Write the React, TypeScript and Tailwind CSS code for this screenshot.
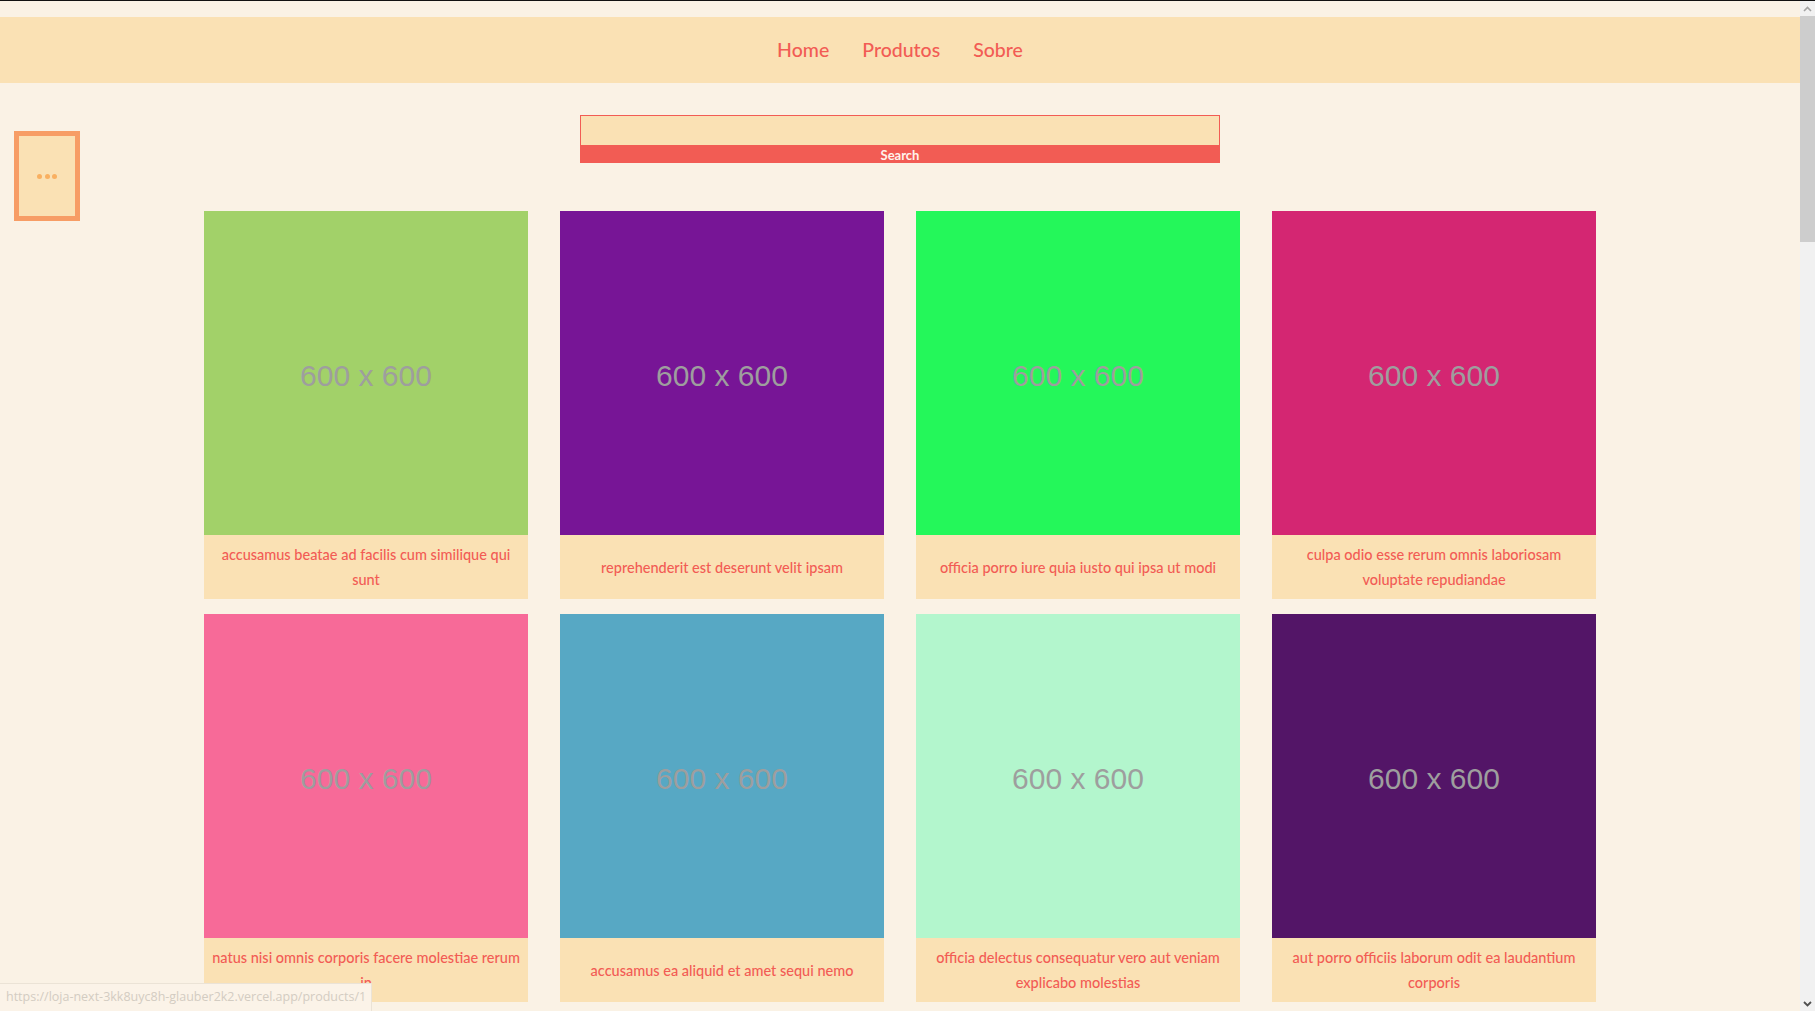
const products = [
  { title: "accusamus beatae ad facilis cum similique qui sunt", color: "bg-[#a2d169]" },
  { title: "reprehenderit est deserunt velit ipsam", color: "bg-[#771596]" },
  { title: "officia porro iure quia iusto qui ipsa ut modi", color: "bg-[#24f75a]" },
  { title: "culpa odio esse rerum omnis laboriosam voluptate repudiandae", color: "bg-[#d42672]" },
  { title: "natus nisi omnis corporis facere molestiae rerum in", color: "bg-[#f76a98]" },
  { title: "accusamus ea aliquid et amet sequi nemo", color: "bg-[#57a8c4]" },
  { title: "officia delectus consequatur vero aut veniam explicabo molestias", color: "bg-[#b3f6cd]" },
  { title: "aut porro officiis laborum odit ea laudantium corporis", color: "bg-[#531567]" },
]

function ProductCard({ title, color }: { title: string; color: string }) {
  return (
    <div className="flex flex-col">
      <div className={`${color} h-[324px] flex items-center justify-center pt-[5px]`}>
        <span className="text-[30px] text-[#9e9e9e] font-['Liberation_Sans',Arial,sans-serif]">600 x 600</span>
      </div>
      <div className="h-[64px] bg-[#fae1b4] flex items-center justify-center px-[4px] text-center text-[14.5px] leading-[25px] text-[#f25c54] font-['Lato',sans-serif] font-medium">
        {title}
      </div>
    </div>
  )
}

function Scrollbar() {
  return (
    <div className="w-[15px] bg-[#f1f1f1] flex flex-col">
      <div className="h-[15px] flex items-center justify-center">
        <svg width="9" height="6" viewBox="0 0 9 6"><path d="M1 5 L4.5 1.5 L8 5" stroke="#a3a3a3" strokeWidth="1.6" fill="none" /></svg>
      </div>
      <div className="h-[226px] bg-[#cdcdcd]" />
      <div className="flex-1" />
      <div className="h-[15px] flex items-center justify-center">
        <svg width="9" height="6" viewBox="0 0 9 6"><path d="M1 1 L4.5 4.5 L8 1" stroke="#505050" strokeWidth="1.8" fill="none" /></svg>
      </div>
    </div>
  )
}

export default function App() {
  return (
    <div className="h-[1011px] w-[1815px] overflow-hidden flex flex-col bg-[#faf2e5]">
      <div className="h-px bg-[#111]" />
      <div className="flex-1 flex min-h-0">
        <main className="relative flex-1 overflow-hidden pt-[16px]">
          {/* Header */}
          <header className="h-[66px] bg-[#fae1b4] flex items-center justify-center gap-[33px] text-[19.5px] text-[#f25c54] font-['Lato',sans-serif] font-medium">
            <a>Home</a>
            <a>Produtos</a>
            <a>Sobre</a>
          </header>

          {/* Menu toggle */}
          <button className="absolute left-[14px] top-[130px] w-[66px] h-[90px] border-[5px] border-[#f79d65] bg-[#fae1b4] flex items-center justify-center gap-[2.5px]">
            <span className="w-[5px] h-[5px] rounded-full bg-[#f9b061]" />
            <span className="w-[5px] h-[5px] rounded-full bg-[#f9b061]" />
            <span className="w-[5px] h-[5px] rounded-full bg-[#f9b061]" />
          </button>

          {/* Search */}
          <div className="mt-[32px] mx-auto w-[640px] flex flex-col">
            <input className="h-[31px] bg-[#fae1b4] border border-[#f25c54] outline-none" />
            <button className="h-[17px] bg-[#f25c54] text-[#fff3ec] text-[13px] font-bold leading-[15px] pt-[2px] font-['Lato',sans-serif]">
              Search
            </button>
          </div>

          {/* Products */}
          <div className="mt-[48px] mx-auto w-[1392px] grid grid-cols-4 gap-x-[32px] gap-y-[15px]">
            {products.map((p) => (
              <ProductCard key={p.title} title={p.title} color={p.color} />
            ))}
          </div>

          {/* Link status */}
          <div className="absolute left-0 bottom-0 w-[372px] h-[28px] bg-[#fbf3e8] border-t border-r border-[#ebe3d6] flex items-center pl-[6px] text-[12.5px] text-[#d3ccc2] font-['Open_Sans',sans-serif] whitespace-nowrap overflow-hidden">
            https://loja-next-3kk8uyc8h-glauber2k2.vercel.app/products/1
          </div>
        </main>
        <Scrollbar />
      </div>
    </div>
  )
}
